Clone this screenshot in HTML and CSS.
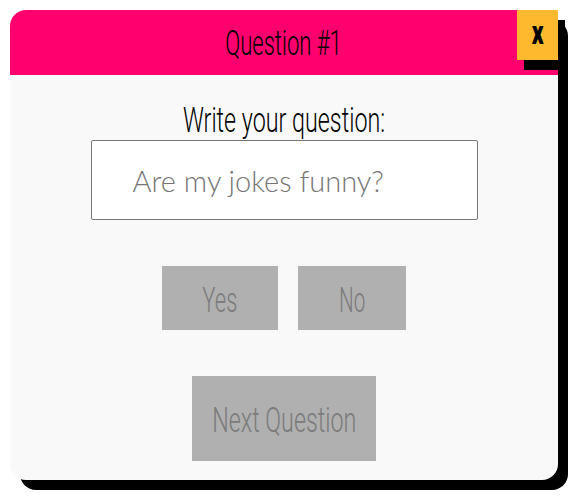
FILE: index.html
```html
<!DOCTYPE html>
<html>
<head>
<meta charset="utf-8">
<link rel="stylesheet" href="styles.css">
</head>
<body>
<div class="stage">
  <div class="card">
    <div class="header"><span class="cond title">Question #1</span></div>
    <button class="close"><span class="close-x">x</span></button>
    <div class="content">
      <label class="label"><span class="cond cond-wide">Write your question:</span></label>
      <input class="field" type="text" placeholder="Are my jokes funny?">
      <div class="answers">
        <button class="btn btn-answer"><span class="cond">Yes</span></button>
        <button class="btn btn-answer btn-no"><span class="cond cond-narrow">No</span></button>
      </div>
      <button class="btn btn-next"><span class="cond cond-wide">Next Question</span></button>
    </div>
  </div>
</div>
</body>
</html>
```

FILE: styles.css
```css
html, body {
  margin: 0;
  padding: 0;
  background: #ffffff;
}
.stage {
  padding: 10px;
}
.card {
  position: relative;
  width: 548px;
  height: 470px;
  background: #f9f9f9;
  border-radius: 16px;
  box-shadow: 10px 10px 0 #000;
}
.cond {
  display: inline-block;
  font-family: Roboto, "Liberation Sans", sans-serif;
  font-weight: 300;
  font-size: 35px;
  line-height: 35px;
  white-space: nowrap;
  transform: translateY(1px) scaleX(0.63);
}
.cond-wide {
  transform: translateY(1px) scaleX(0.665);
}
.cond-narrow {
  transform: translateY(1px) scaleX(0.59);
}
.header {
  height: 65px;
  background: #ff006e;
  border-radius: 16px 16px 0 0;
  display: flex;
  align-items: center;
  justify-content: center;
}
.title {
  color: #000;
}
.close {
  position: absolute;
  top: 0;
  right: 0;
  width: 41px;
  height: 50px;
  border: none;
  padding: 0;
  background: #ffb92e;
  box-shadow: 7px 10px 0 #000;
  display: flex;
  align-items: center;
  justify-content: center;
}
.close-x {
  display: inline-block;
  font-family: Roboto, "Liberation Sans", sans-serif;
  font-weight: 900;
  font-size: 34px;
  line-height: 34px;
  color: #000;
  transform: scaleX(0.68) translateY(-3px);
}
.content {
  display: flex;
  flex-direction: column;
  align-items: center;
}
.label {
  display: block;
  margin-top: 27px;
  height: 38px;
  color: #000;
}
.field {
  box-sizing: border-box;
  width: 387px;
  height: 80px;
  border: 1px solid #767676;
  border-radius: 2px;
  background: #fff;
  padding: 0 0 0 41px;
  font-family: Lato, sans-serif;
  font-weight: 300;
  font-size: 29px;
  color: #000;
  outline: none;
}
.field::placeholder {
  color: #757575;
}
.answers {
  display: flex;
  gap: 20px;
  margin-top: 46px;
}
.btn {
  border: none;
  background: #b0b0b0;
  color: #7b7b7b;
  padding: 0;
  display: flex;
  align-items: center;
  justify-content: center;
}
.btn .cond {
  margin-top: 2px;
}
.btn-answer {
  width: 116px;
  height: 64px;
}
.btn-no {
  width: 108px;
}
.btn-next {
  margin-top: 46px;
  width: 184px;
  height: 85px;
}
```
